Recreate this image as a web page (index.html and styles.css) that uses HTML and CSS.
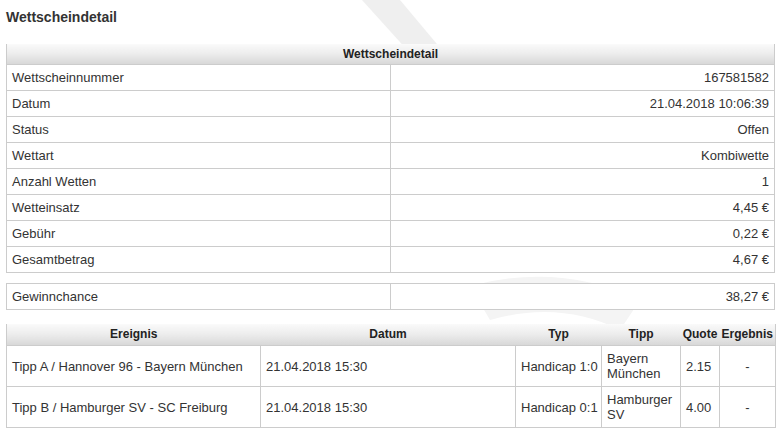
FILE: index.html
```html
<!DOCTYPE html>
<html lang="de">
<head>
<meta charset="utf-8">
<title>Wettscheindetail</title>
<link rel="stylesheet" href="styles.css">
</head>
<body>
<svg class="watermark" width="783" height="437" viewBox="0 0 783 437" aria-hidden="true">
  <path d="M362 0 L400 0 L452 62 L418 62 Z" fill="#efefef"/>
  <path d="M470 286 Q560 262 640 300 L620 330 Q560 300 490 320 Z" fill="#f4f4f4"/>
</svg>
<div class="page">
  <h1 class="title">Wettscheindetail</h1>

  <table class="grid detail">
    <thead>
      <tr><th colspan="2">Wettscheindetail</th></tr>
    </thead>
    <tbody>
      <tr><td>Wettscheinnummer</td><td class="num">167581582</td></tr>
      <tr><td>Datum</td><td class="num">21.04.2018 10:06:39</td></tr>
      <tr><td>Status</td><td class="num">Offen</td></tr>
      <tr><td>Wettart</td><td class="num">Kombiwette</td></tr>
      <tr><td>Anzahl Wetten</td><td class="num">1</td></tr>
      <tr><td>Wetteinsatz</td><td class="num">4,45 €</td></tr>
      <tr><td>Gebühr</td><td class="num">0,22 €</td></tr>
      <tr><td>Gesamtbetrag</td><td class="num">4,67 €</td></tr>
    </tbody>
  </table>

  <table class="grid detail chance">
    <tbody>
      <tr><td>Gewinnchance</td><td class="num">38,27 €</td></tr>
    </tbody>
  </table>

  <table class="grid events">
    <colgroup>
      <col class="c-event"><col class="c-date"><col class="c-type"><col class="c-tip"><col class="c-quote"><col class="c-result">
    </colgroup>
    <thead>
      <tr><th>Ereignis</th><th>Datum</th><th>Typ</th><th>Tipp</th><th>Quote</th><th>Ergebnis</th></tr>
    </thead>
    <tbody>
      <tr><td>Tipp A / Hannover 96 - Bayern München</td><td>21.04.2018 15:30</td><td class="type">Handicap 1:0</td><td>Bayern München</td><td>2.15</td><td class="center">-</td></tr>
      <tr><td>Tipp B / Hamburger SV - SC Freiburg</td><td>21.04.2018 15:30</td><td class="type">Handicap 0:1</td><td>Hamburger SV</td><td>4.00</td><td class="center">-</td></tr>
    </tbody>
  </table>
</div>
</body>
</html>
```

FILE: styles.css
```css
html, body {
  margin: 0;
  padding: 0;
  background: #ffffff;
}

body {
  font-family: "Liberation Sans", Arial, Helvetica, sans-serif;
  font-size: 13px;
  line-height: 15px;
  color: #333333;
  position: relative;
  min-height: 437px;
  overflow: hidden;
}

.watermark {
  position: absolute;
  left: 0;
  top: 0;
  z-index: 0;
}

.page {
  position: relative;
  z-index: 1;
  padding: 0 8px 0 6px;
}

.title {
  margin: 0;
  padding-top: 9px;
  font-size: 14px;
  line-height: 16px;
  font-weight: bold;
  color: #333333;
}

.grid {
  width: 100%;
  border-collapse: collapse;
  background: #ffffff;
}

.grid th,
.grid td {
  border: 1px solid #cccccc;
}

.grid th {
  font-size: 12px;
  font-weight: bold;
  color: #222222;
  text-align: center;
  padding: 3px 2px 2px;
  background: linear-gradient(to bottom, #fafafa 0%, #ececec 50%, #d8d8d8 100%);
  border-top: none;
  border-left: none;
  border-right: none;
}

.grid th:first-child {
  border-left: 1px solid #cccccc;
}

.grid th:last-child {
  border-right: 1px solid #cccccc;
}

.grid td {
  padding: 5px 5px;
  vertical-align: middle;
}

.detail {
  margin-top: 19px;
  table-layout: fixed;
}

.detail td {
  width: 50%;
}

.num {
  text-align: right;
}

.center {
  text-align: center;
}

.type {
  white-space: nowrap;
}

.grid td.type {
  padding-left: 5px;
  padding-right: 3px;
}

.chance {
  margin-top: 10px;
}

.events {
  margin-top: 14px;
  table-layout: fixed;
}

.events th {
  padding: 3px 1px;
}

.c-event { width: 254px; }
.c-date { width: 255px; }
.c-type { width: 86px; }
.c-tip { width: 79px; }
.c-quote { width: 39px; }
.c-result { width: 56px; }
```
